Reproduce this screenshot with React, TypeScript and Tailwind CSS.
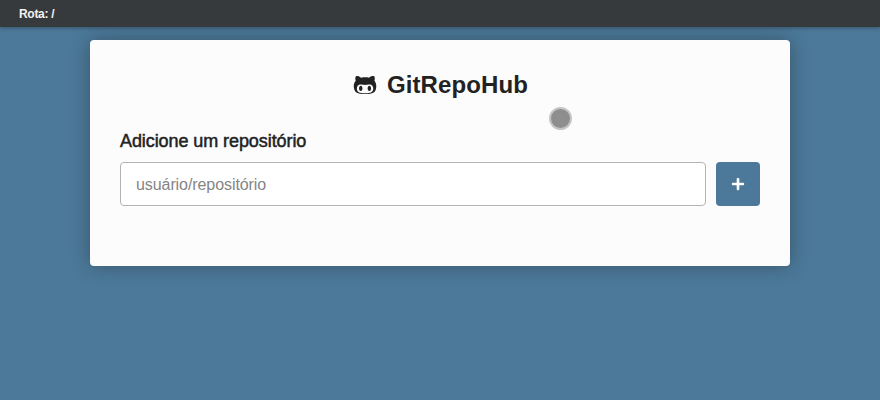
import { FaGithubAlt, FaPlus } from "react-icons/fa";

export default function App() {
  return (
    <div className="relative h-[400px] w-[880px] overflow-hidden bg-[#4c7999] font-['Liberation_Sans',Arial,sans-serif] text-[#222]">
      <header className="relative flex h-[27px] items-center bg-[#373a3c] pl-[19px] text-xs font-bold tracking-[-0.3px] text-[#f2f2f2] shadow-[0_1px_4px_rgba(0,0,0,0.3)]">
        <span>Rota: /</span>
      </header>
      <main className="mx-auto mt-[13px] h-[226px] w-[700px] rounded bg-[#fcfcfc] px-[30px] pt-[30px] shadow-[0_0_20px_rgba(0,0,0,0.3)]">
        <h1 className="flex h-[30px] items-center justify-center pl-px text-2xl font-bold tracking-[0.12px]">
          <FaGithubAlt size={24} className="mr-[10px]" />
          <span>GitRepoHub</span>
        </h1>
        <form className="mt-[30px]" onSubmit={(e) => e.preventDefault()}>
          <label htmlFor="repo" className="block h-[32px] text-lg leading-[22px] tracking-[-0.08px] [-webkit-text-stroke:0.5px_#222]">
            Adicione um repositório
          </label>
          <div className="flex gap-[10px]">
            <input
              id="repo"
              placeholder="usuário/repositório"
              className="h-11 flex-1 rounded border border-[#b4b4b4] bg-white px-[15px] pt-[2px] text-base tracking-[-0.08px] outline-none placeholder:text-[#858585]"
            />
            <button type="submit" aria-label="+" className="flex h-11 w-11 items-center justify-center rounded bg-[#4c7999] text-white">
              <FaPlus size={14} />
            </button>
          </div>
        </form>
      </main>
      <div className="absolute left-[549px] top-[107px] h-[23px] w-[23px] rounded-full border-2 border-[#c5c5c5] bg-[#8e8e8e]" />
    </div>
  );
}
